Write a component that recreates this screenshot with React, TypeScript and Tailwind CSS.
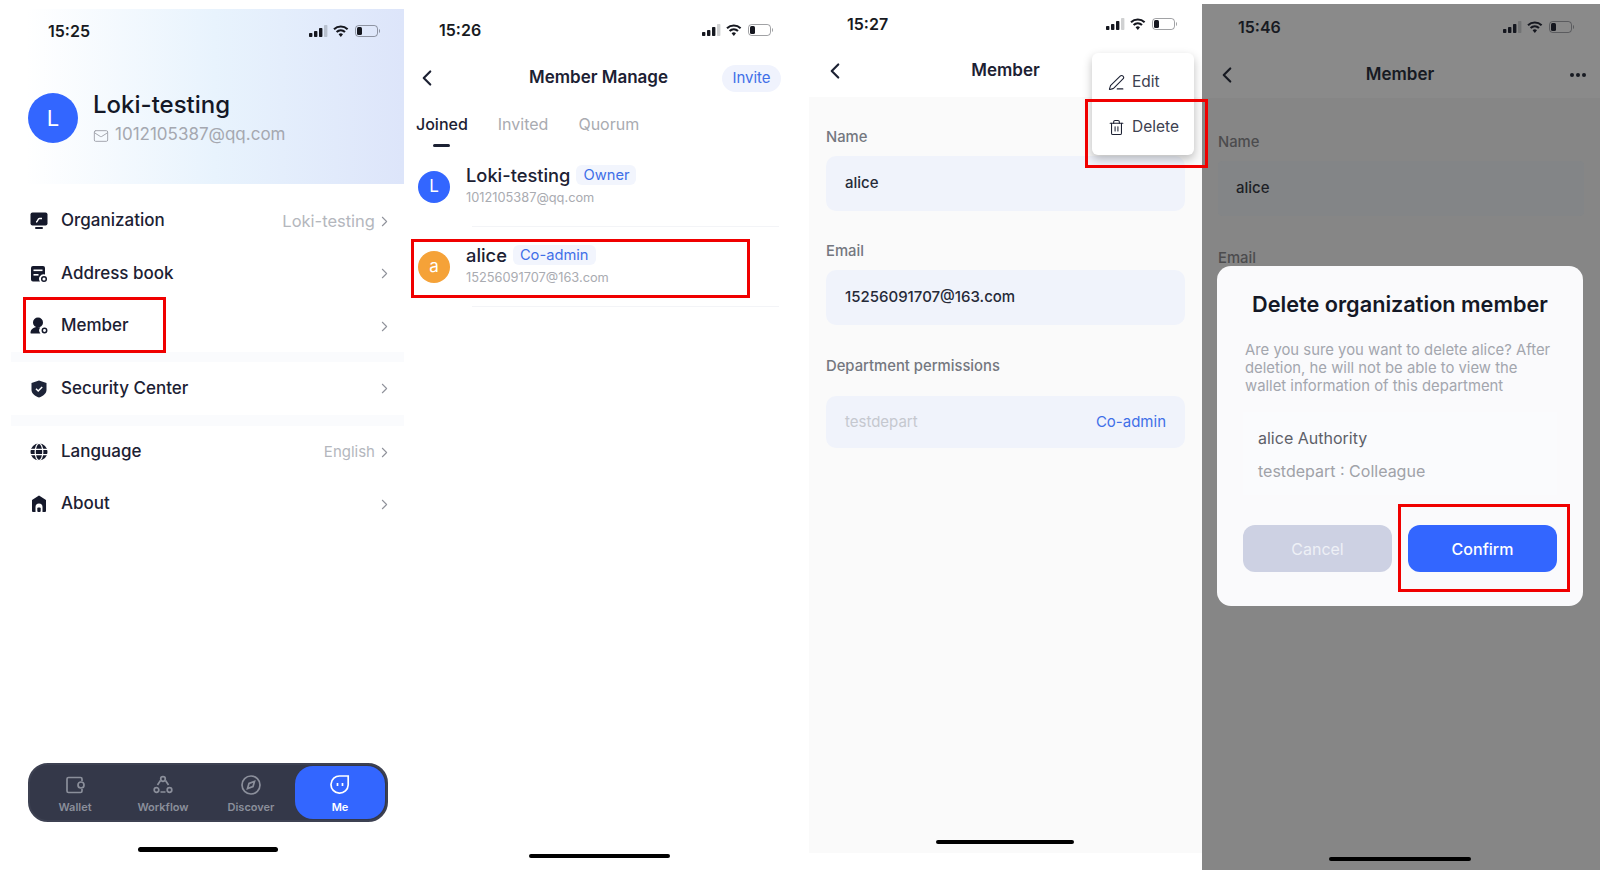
import React from "react";
import { ChevronLeft, ChevronRight, Mail, Trash2, PenLine } from "lucide-react";

const font = { fontFamily: "Inter, 'Noto Sans', sans-serif" };

const StatusBar = ({ time, className }: { time: string; className: string }) => (
  <div className={`flex shrink-0 items-center justify-between ${className}`}>
    <span className="text-[16px] font-semibold text-[#171a22]">{time}</span>
    <svg width="71" height="16" viewBox="0 0 71 16">
      <rect x="0" y="10" width="3.4" height="4" rx="0.8" fill="#15171f" />
      <rect x="5" y="8" width="3.4" height="6" rx="0.8" fill="#15171f" />
      <rect x="10" y="5" width="3.4" height="9" rx="0.8" fill="#15171f" />
      <rect x="15" y="2" width="3.4" height="12" rx="0.8" fill="#15171f" opacity="0.2" />
      <path d="M25 6.2a10 10 0 0 1 13.6 0M27.6 9a6.2 6.2 0 0 1 8.4 0" fill="none" stroke="#15171f" strokeWidth="2.1" />
      <path d="M29.6 11.2a3.2 3.2 0 0 1 4.4 0L31.8 14z" fill="#15171f" />
      <rect x="46.5" y="2.5" width="22" height="11" rx="3.2" fill="none" stroke="#15171f" strokeOpacity="0.4" />
      <rect x="48" y="4" width="5" height="8" rx="1.5" fill="#15171f" />
      <path d="M70 6v4c.7-.3 1-1.100 1-2s-.3-1.700-1-2z" fill="#15171f" opacity="0.4" />
    </svg>
  </div>
);

const HomeBar = ({ className }: { className: string }) => (
  <div className={`h-[4px] shrink-0 rounded-full bg-black ${className}`} />
);

const OrgIcon = () => (
  <svg width="18" height="18" viewBox="0 0 18 18">
    <rect x="0.500" y="0.500" width="17" height="13" rx="2" fill="#15192b" />
    <rect x="5" y="15" width="8" height="2" rx="1" fill="#15192b" />
    <path d="M6 10c2 0 1.500-3.500 3.500-3.500H12" stroke="#fff" strokeWidth="1.500" fill="none" />
  </svg>
);
const BookIcon = () => (
  <svg width="18" height="18" viewBox="0 0 18 18">
    <path d="M3 1h10a2 2 0 0 1 2 2v6.500a4.500 4.500 0 0 0-5 7H3a2 2 0 0 1-2-2V3a2 2 0 0 1 2-2z" fill="#15192b" />
    <rect x="3.500" y="4.500" width="9" height="1.600" fill="#fff" />
    <rect x="3.500" y="9" width="5" height="1.600" fill="#fff" />
    <circle cx="14" cy="14" r="2.300" fill="none" stroke="#15192b" strokeWidth="1.500" />
  </svg>
);
const MemberIcon = () => (
  <svg width="18" height="18" viewBox="0 0 18 18">
    <circle cx="8" cy="5.500" r="5" fill="#15192b" />
    <path d="M0.500 16c0-3.500 3-6 7-6 1 0 2 .2 2.800.5a4.500 4.500 0 0 0 .2 6H1.500a1 1 0 0 1-1-.5z" fill="#15192b" />
    <circle cx="14.500" cy="13.500" r="2.200" fill="none" stroke="#15192b" strokeWidth="1.500" />
  </svg>
);
const ShieldIcon = () => (
  <svg width="18" height="18" viewBox="0 0 18 18">
    <path d="M9 0.500l7.500 2.500v7c0 3.500-3.500 6-7.500 7.500C5 16 1.500 13.500 1.500 10V3z" fill="#1d2438" />
    <path d="M6 8.800l2.200 2.200L12.200 7" stroke="#fff" strokeWidth="1.500" fill="none" />
  </svg>
);
const GlobeIcon = () => (
  <svg width="18" height="18" viewBox="0 0 18 18">
    <circle cx="9" cy="9" r="8.500" fill="#15192b" />
    <ellipse cx="9" cy="9" rx="3.800" ry="8.500" fill="none" stroke="#fff" strokeWidth="1.200" />
    <path d="M0 6.300h18M0 11.700h18" stroke="#fff" strokeWidth="1.200" />
  </svg>
);
const HomeIcon = () => (
  <svg width="18" height="18" viewBox="0 0 18 18">
    <path d="M9 0.500L16 5v11a1 1 0 0 1-1 1h-2.500v-5a3.500 3.500 0 0 0-7 0v5H3a1 1 0 0 1-1-1V5z" fill="#15192b" />
    <rect x="7.300" y="12.500" width="3.400" height="4.500" rx="1" fill="#15192b" />
  </svg>
);

const MenuRow = ({ icon, label, value, small, className = "" }: { icon: React.ReactNode; label: string; value?: string; small?: boolean; className?: string }) => (
  <div className={`flex items-center pl-[19px] pr-[11px] ${className}`}>
    <span className="w-[31px]">{icon}</span>
    <span className="text-[17px] font-medium text-[#1c2133]">{label}</span>
    {value && <span className={`ml-auto text-[#b4b7bd] ${small ? "text-[15px]" : "text-[16.500px]"}`}>{value}</span>}
    <ChevronRight className={`${value ? "ml-[1px]" : "ml-auto"} text-[#8f929b]`} size={17} strokeWidth={1.500} />
  </div>
);

const TabItem = ({ icon, label, active }: { icon: React.ReactNode; label: string; active?: boolean }) => (
  <div className={`flex flex-col items-center pt-[9px] ${active ? "rounded-[18px] bg-[#3366ff] text-white" : "text-[#8b8f9b]"}`}>
    {icon}
    <span className="mt-[5px] text-[11px] font-semibold leading-[14px]">{label}</span>
  </div>
);

const Panel1 = () => (
  <div className="mt-[9px] flex h-[864px] w-[394px] shrink-0 flex-col pr-[1px]">
    <div className="ml-[15px] h-[175px] shrink-0 bg-linear-to-r from-white via-[#e8f3fd] to-[#dde5fa]">
      <StatusBar time="15:25" className="h-[44px] pl-[22px] pr-[24px]" />
      <div className="mt-[37px] flex items-center gap-[15px] pl-[2px]">
        <div className="flex size-[50px] items-center justify-center rounded-full bg-[#3366ff] text-[22px] text-white">L</div>
        <div>
          <div className="text-[24px] font-medium leading-[30px] text-[#141826]">Loki-testing</div>
          <div className="mt-[2px] flex items-center gap-[6px] text-[#a5a8b0]">
            <Mail size={16} strokeWidth={1.500} className="mt-[3px]" />
            <span className="text-[17px] leading-[24px]">1012105387@qq.com</span>
          </div>
        </div>
      </div>
    </div>
    <MenuRow className="mt-[11px] h-[52px]" icon={<OrgIcon />} label="Organization" value="Loki-testing" />
    <MenuRow className="h-[53px]" icon={<BookIcon />} label="Address book" />
    <MenuRow className="h-[52px]" icon={<MemberIcon />} label="Member" />
    <div className="h-[10px] bg-[#fafbfd]" />
    <MenuRow className="h-[53px]" icon={<ShieldIcon />} label="Security Center" />
    <div className="h-[11px] bg-[#fafbfd]" />
    <MenuRow className="h-[52px]" icon={<GlobeIcon />} label="Language" value="English" small />
    <MenuRow className="h-[52px]" icon={<HomeIcon />} label="About" />
    <div className="ml-[17px] mt-auto grid h-[59px] w-[360px] grid-cols-[88px_88px_88px_90px] rounded-[20px] border-2 border-[#3d4152] bg-[#343849] py-[1px] pl-[1px]">
      <TabItem
        label="Wallet"
        icon={
          <svg width="20" height="20" viewBox="0 0 20 20" fill="none" stroke="currentColor" strokeWidth="1.700">
            <path d="M17 6V4a1.500 1.500 0 0 0-1.500-1.500h-12A1.500 1.500 0 0 0 2 4v12a1.500 1.500 0 0 0 1.500 1.500h12A1.500 1.500 0 0 0 17 16v-2" />
            <rect x="13" y="7" width="6" height="6" rx="3" />
          </svg>
        }
      />
      <TabItem
        label="Workflow"
        icon={
          <svg width="20" height="20" viewBox="0 0 20 20" fill="none" stroke="currentColor" strokeWidth="1.700">
            <circle cx="10" cy="4" r="2.300" />
            <circle cx="3.500" cy="15" r="2.300" />
            <circle cx="16.500" cy="15" r="2.300" />
            <path d="M7.500 5.500L4.500 10M12.500 5.500l3 4.500M7.500 17h5" />
          </svg>
        }
      />
      <TabItem
        label="Discover"
        icon={
          <svg width="20" height="20" viewBox="0 0 20 20" fill="none" stroke="currentColor" strokeWidth="1.700">
            <circle cx="10" cy="10" r="9" />
            <path d="M13.500 6.500l-1.500 5-5.500 2 1.500-5z" />
          </svg>
        }
      />
      <TabItem
        active
        label="Me"
        icon={
          <svg width="20" height="20" viewBox="0 0 20 20" fill="none" stroke="currentColor" strokeWidth="1.700">
            <path d="M10 1h8.200v9a8.600 8.600 0 1 1-8.200-9z" />
            <path d="M7.500 8v3M12.500 8v3" />
          </svg>
        }
      />
    </div>
    <HomeBar className="ml-[127px] mb-[21px] mt-[25px] !h-[5px] w-[140px]" />
  </div>
);

const Badge = ({ text }: { text: string }) => (
  <span className="rounded-[6px] bg-[#f2f5fd] px-[7px] text-[14.700px] leading-[20px] text-[#3f6fe8]">{text}</span>
);

const MemberRow = ({ letter, color, name, badge, email }: { letter: string; color: string; name: string; badge: string; email: string }) => (
  <div className="flex h-[79px] items-center gap-[16px] pl-[13px]">
    <div className={`flex size-[32px] items-center justify-center rounded-full text-[17px] text-white ${color}`}>{letter}</div>
    <div className="-mt-[4px]">
      <div className="flex items-center gap-[6px]">
        <span className="text-[18.300px] font-medium leading-[25px] text-[#1c2133]">{name}</span>
        <Badge text={badge} />
      </div>
      <div className="mt-[1px] text-[12.800px] leading-[18px] text-[#a9abb1]">{email}</div>
    </div>
  </div>
);

const Panel2 = () => (
  <div className="flex h-[873px] w-[404px] shrink-0 flex-col">
    <StatusBar time="15:26" className="h-[60px] pl-[34px] pr-[36px]" />
    <div className="grid h-[36px] grid-cols-[1fr_auto_1fr] items-center pl-[9px] pr-[28px]">
      <ChevronLeft size={26} strokeWidth={2} className="text-[#1c2133]" />
      <span className="ml-[2px] text-[17px] font-semibold text-[#1c2133]">Member Manage</span>
      <span className="ml-auto flex h-[27px] w-[59px] items-center justify-center rounded-full bg-[#f0f3fd] text-[15px] text-[#3f6fe8]">Invite</span>
    </div>
    <div className="mt-[16px] flex gap-[30px] pl-[11px] text-[16px] leading-[24px] text-[#a9abb1]">
      <div className="flex flex-col items-center">
        <span className="font-medium text-[#1c2133]">Joined</span>
        <span className="mt-[8px] h-[3px] w-[17px] rounded-full bg-[#1c2133]" />
      </div>
      <span>Invited</span>
      <span>Quorum</span>
    </div>
    <MemberRow letter="L" color="bg-[#3366ff]" name="Loki-testing" badge="Owner" email="1012105387@qq.com" />
    <div className="ml-[67px] mr-[30px] h-px bg-[#f3f4f7]" />
    <MemberRow letter="a" color="bg-[#f5a238]" name="alice" badge="Co-admin" email="15256091707@163.com" />
    <div className="ml-[67px] mr-[30px] h-px bg-[#f3f4f7]" />
    <HomeBar className="ml-[124px] mb-[15px] mt-auto w-[141px]" />
  </div>
);

const Field = ({ label, value, className }: { label: string; value: string; className: string }) => (
  <>
    <div className={`text-[14.800px] font-medium leading-[20px] text-[#74777f] ${className}`}>{label}</div>
    <div className="mt-[9px] flex h-[55px] items-center rounded-[10px] bg-[#f0f3fb] pl-[19px] text-[15px] font-medium text-[#262a38]">{value}</div>
  </>
);

const Panel3 = () => (
  <div className="relative flex h-[853px] w-[393px] shrink-0 flex-col">
    <StatusBar time="15:27" className="h-[48px] pl-[38px] pr-[25px]" />
    <div className="grid h-[49px] grid-cols-[1fr_auto_1fr] items-center px-[13px] pb-[3px]">
      <ChevronLeft size={26} strokeWidth={2} className="text-[#1c2133]" />
      <span className="text-[17px] font-semibold text-[#1c2133]">Member</span>
      <span />
    </div>
    <div className="flex flex-1 flex-col bg-[#fafafa] px-[17px] pt-[30px]">
      <Field label="Name" value="alice" className="" />
      <Field label="Email" value="15256091707@163.com" className="mt-[30px]" />
      <div className="mt-[31px] text-[14.800px] font-medium leading-[20px] text-[#74777f]">Department permissions</div>
      <div className="mt-[20px] flex h-[52px] items-center justify-between rounded-[10px] bg-[#f0f3fb] pl-[19px] pr-[19px] text-[15px]">
        <span className="text-[#c5c8cf]">testdepart</span>
        <span className="text-[#3f6fe8]">Co-admin</span>
      </div>
      <HomeBar className="ml-[110px] mb-[9px] mt-auto w-[138px]" />
    </div>
    <div className="absolute left-[283px] top-[53px] flex h-[102px] w-[102px] flex-col rounded-[6px] bg-white pl-[16px] pt-[17px] text-[15.500px] text-[#3d4150] shadow-[0_4px_10px_rgba(0,0,0,0.25)]">
      <div className="flex h-[24px] items-center gap-[7px]">
        <PenLine size={17} strokeWidth={1.500} className="text-[#1c2133]" />
        Edit
      </div>
      <div className="mt-[21px] flex h-[24px] items-center gap-[7px]">
        <Trash2 size={17} strokeWidth={1.500} className="text-[#1c2133]" />
        Delete
      </div>
    </div>
  </div>
);

const Panel4 = () => (
  <div className="relative mt-[4px] flex h-[866px] w-[398px] shrink-0 flex-col bg-[#868686]">
    <div className="bg-[#8a8a8a]">
      <StatusBar time="15:46" className="h-[46px] pl-[36px] pr-[26px]" />
      <div className="grid h-[48px] grid-cols-[1fr_auto_1fr] items-center pl-[12px] pr-[14px] pt-[2px]">
        <ChevronLeft size={26} strokeWidth={2} className="text-[#171a22]" />
        <span className="text-[17px] font-semibold text-[#171a22]">Member</span>
        <div className="ml-auto flex gap-[2px]">
          <span className="size-[4px] rounded-full bg-[#171a22]" />
          <span className="size-[4px] rounded-full bg-[#171a22]" />
          <span className="size-[4px] rounded-full bg-[#171a22]" />
        </div>
      </div>
    </div>
    <div className="flex flex-1 flex-col px-[16px] pt-[34px]">
      <div className="text-[14.800px] font-medium leading-[20px] text-[#4c4c4e]">Name</div>
      <div className="mt-[9px] flex h-[55px] items-center rounded-[4px] bg-[#838587] pl-[18px] text-[15px] font-medium text-[#1d1f26]">alice</div>
      <div className="mt-[32px] text-[14.800px] font-medium leading-[20px] text-[#4c4c4e]">Email</div>
      <HomeBar className="ml-[111px] mb-[9px] mt-auto w-[142px]" />
    </div>
    <div className="absolute left-[15px] top-[262px] h-[340px] w-[366px] rounded-[14px] bg-[#fafafc] pt-[24px]">
      <div className="text-center text-[21.700px] font-semibold leading-[28px] text-[#141826]">Delete organization member</div>
      <p className="ml-[28px] mt-[23px] w-[308px] text-[14.850px] leading-[18px] text-[#a3a6ae]">
        Are you sure you want to delete alice? After deletion, he will not be able to view the wallet information of this department
      </p>
      <div className="ml-[26px] mt-[17px] h-[83px] w-[314px] bg-[#fafbfd] pl-[15px] pt-[14px] text-[16px]">
        <div className="leading-[24px] text-[#5d6068]">alice Authority</div>
        <div className="mt-[9px] leading-[24px] text-[#a0a2a8]">testdepart : Colleague</div>
      </div>
      <div className="ml-[26px] mt-[30px] flex gap-[16px]">
        <div className="flex h-[47px] w-[149px] items-center justify-center rounded-[12px] bg-[#cdd1e3] text-[16px] text-[#eef0f6]">Cancel</div>
        <div className="flex h-[47px] w-[149px] items-center justify-center rounded-[12px] bg-[#3366ff] text-[16px] font-medium text-white">Confirm</div>
      </div>
    </div>
  </div>
);

export default function App() {
  return (
    <div className="relative flex h-[873px] w-[1607px] overflow-hidden bg-white pl-[11px]" style={font}>
      <Panel1 />
      <Panel2 />
      <Panel3 />
      <Panel4 />
      {/* annotation boxes drawn over the screenshots */}
      <div className="absolute left-[23px] top-[297px] h-[56px] w-[143px] border-[3px] border-[#f00000]" />
      <div className="absolute left-[411px] top-[239px] h-[59px] w-[339px] border-[3px] border-[#f00000]" />
      <div className="absolute left-[1085px] top-[99px] h-[69px] w-[123px] border-[3px] border-[#f00000]" />
      <div className="absolute left-[1398px] top-[504px] h-[88px] w-[172px] border-[3px] border-[#f00000]" />
    </div>
  );
}
